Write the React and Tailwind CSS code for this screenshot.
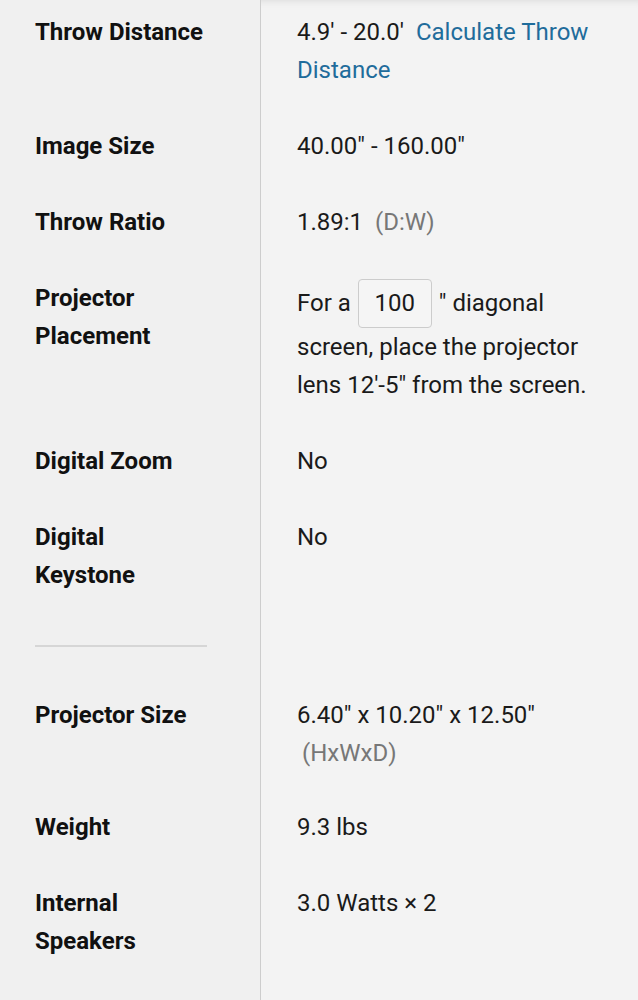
import React from 'react';

// one spec row: bold label on the left, value on the right
const SpecRow = ({ label, children, first = false, grow = false, tight = false }) => {
    const pt = first ? 'pt-[13px]' : 'pt-[19px]';
    const pb = tight ? 'pb-[17px]' : 'pb-[19px]';
    return (
        <div className={`grid grid-cols-[261px_1fr] ${grow ? 'flex-1' : ''}`}>
            <div className={`bg-[#f0f0f0] border-r border-[#cdcdcd] pl-[35px] pr-[20px] ${pt} ${pb}`}>
                <div className="font-bold text-[#111111] leading-[38px]">{label}</div>
            </div>
            <div className={`pl-[36px] pr-[30px] ${pt} ${pb} leading-[38px] text-[#1a1a1a]`}>
                {children}
            </div>
        </div>
    );
};

const App = () => {
    return (
        <div
            className="min-h-screen flex flex-col bg-[#f3f3f3] text-[24px] shadow-[inset_0_8px_8px_-8px_rgba(0,0,0,0.12)]"
            style={{ fontFamily: 'Roboto, "Liberation Sans", sans-serif' }}
        >
            <SpecRow label="Throw Distance" first>
                4.9' - 20.0'{'\u00a0 '}
                <span className="text-[#1f6c9b]">Calculate Throw Distance</span>
            </SpecRow>

            <SpecRow label="Image Size">40.00" - 160.00"</SpecRow>

            <SpecRow label="Throw Ratio">
                1.89:1{'\u00a0 '}<span className="text-[#777777]">(D:W)</span>
            </SpecRow>

            <SpecRow label={<>Projector<br />Placement</>}>
                For a{' '}
                <span className="inline-block w-[74px] py-[10px] mx-[1px] leading-[27px] text-center border border-[#cccccc] rounded-[4px] bg-[#f5f5f5]">
                    100
                </span>{' '}
                " diagonal screen, place the projector lens 12'-5" from the screen.
            </SpecRow>

            <SpecRow label="Digital Zoom">No</SpecRow>

            <SpecRow label={<>Digital<br />Keystone</>}>No</SpecRow>

            {/* section divider */}
            <div className="grid grid-cols-[261px_1fr]">
                <div className="bg-[#f0f0f0] border-r border-[#cdcdcd] pl-[35px] pr-[53px] pt-[32px] pb-[30px]">
                    <div className="h-[2px] bg-[#d6d6d6]"></div>
                </div>
                <div></div>
            </div>

            <SpecRow label="Projector Size" tight>
                6.40" x 10.20" x 12.50"{' '}
                <span className="inline-block ml-[5px] text-[#777777]">(HxWxD)</span>
            </SpecRow>

            <SpecRow label="Weight">9.3 lbs</SpecRow>

            <SpecRow label={<>Internal<br />Speakers</>} grow>
                3.0 Watts × 2
            </SpecRow>
        </div>
    );
};

export default App;
